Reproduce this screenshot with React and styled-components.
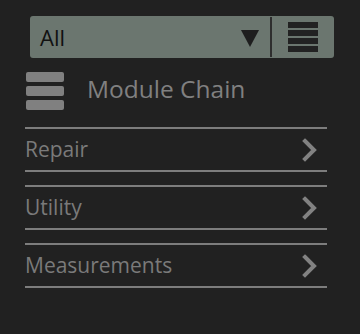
import styled, { createGlobalStyle } from "styled-components";

const GlobalStyle = createGlobalStyle`
  html, body {
    margin: 0;
    padding: 0;
    background: #212121;
  }
  body {
    font-family: "Open Sans", "Noto Sans", sans-serif;
  }
`;

const categories = ["Repair", "Utility", "Measurements"];

const App = () => {
  return (
    <Page>
      <GlobalStyle />
      <Filter>
        <Selected>All</Selected>
        <Arrow />
        <Divider />
        <ListButton>
          <span />
          <span />
          <span />
          <span />
        </ListButton>
      </Filter>

      <Header>
        <Burger>
          <span />
          <span />
          <span />
        </Burger>
        <Title>Module Chain</Title>
      </Header>

      <List>
        {categories.map((name) => (
          <Row key={name}>
            <Label>{name}</Label>
            <svg width="16" height="24" viewBox="0 0 16 24">
              <path
                d="M3 3 L12 12 L3 21"
                fill="none"
                stroke="#828282"
                strokeWidth="4"
                strokeLinecap="square"
              />
            </svg>
          </Row>
        ))}
      </List>
    </Page>
  );
};

export default App;

const Page = styled.div`
  width: 360px;
  height: 334px;
  padding-top: 16px;
  box-sizing: border-box;
  background: #212121;
`;

const Filter = styled.div`
  margin-left: 30px;
  width: 304px;
  height: 42px;
  box-sizing: border-box;
  background: #6b766f;
  border-radius: 3px;
  display: flex;
  align-items: center;
`;

const Selected = styled.div`
  flex: 1;
  padding-left: 10px;
  font-size: 22px;
  color: #111;
  padding-bottom: 1px;
`;

const Arrow = styled.div`
  width: 0;
  height: 0;
  border-left: 9px solid transparent;
  border-right: 9px solid transparent;
  border-top: 17px solid #1e1e1e;
  margin-right: 11px;
  margin-top: 2px;
`;

const Divider = styled.div`
  width: 2px;
  align-self: stretch;
  margin: 1px 0;
  background: #2e2e2e;
`;

const ListButton = styled.div`
  width: 30px;
  margin: 0 16px 0 16px;
  display: flex;
  flex-direction: column;
  gap: 2px;

  & span {
    display: block;
    height: 6px;
    background: #222;
  }
`;

const Header = styled.div`
  margin-top: 14px;
  margin-left: 26px;
  display: flex;
  align-items: center;
  gap: 23px;
`;

const Burger = styled.div`
  width: 38px;
  display: flex;
  flex-direction: column;
  gap: 4px;

  & span {
    display: block;
    height: 10px;
    border-radius: 2px;
    background: #808080;
  }
`;

const Title = styled.div`
  font-size: 24.5px;
  color: #808080;
  margin-top: -5px;
`;

const List = styled.div`
  margin: 17px 0 0 25px;
  width: 302px;
  display: flex;
  flex-direction: column;
  gap: 13px;
`;

const Row = styled.div`
  height: 45px;
  box-sizing: border-box;
  border-top: 2px solid #7d7d7d;
  border-bottom: 2px solid #7d7d7d;
  display: flex;
  align-items: center;
  justify-content: space-between;
  padding-right: 9px;
`;

const Label = styled.div`
  font-size: 21px;
  color: #7a7a7a;
  padding-bottom: 2px;
`;
